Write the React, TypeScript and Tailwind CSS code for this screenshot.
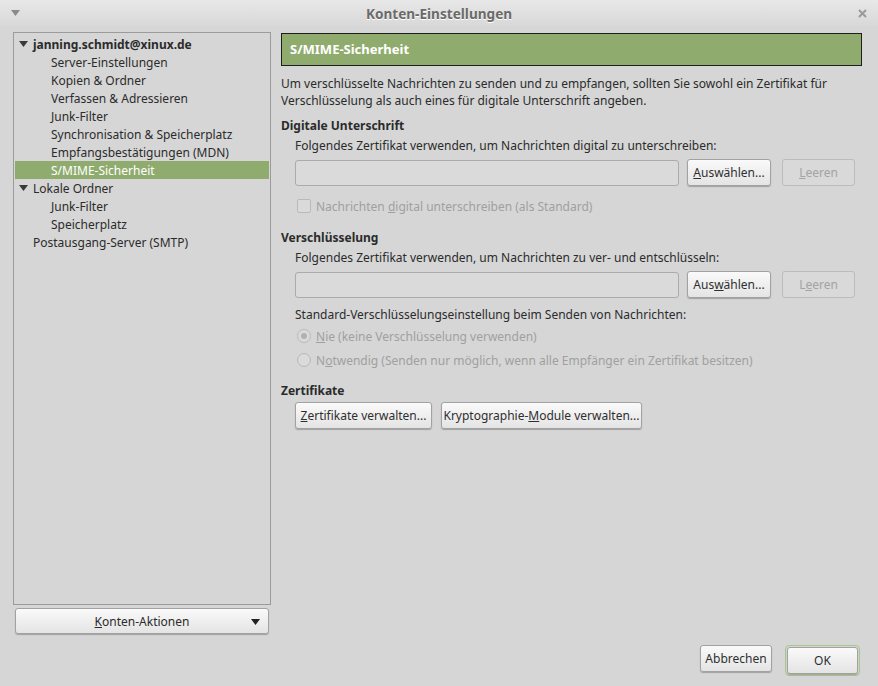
import React from 'react';

const Caret = ({ className = '' }: { className?: string }) => (
  <svg width="9" height="6" viewBox="0 0 9 6" className={className}>
    <path d="M0 0 L9 0 L4.5 6 Z" fill="currentColor" />
  </svg>
);

const Btn = ({ children, disabled, className = '' }: { children: React.ReactNode; disabled?: boolean; className?: string }) => (
  <div
    className={
      'h-[27px] px-[6px] flex items-center justify-center whitespace-nowrap rounded-[3px] border ' +
      (disabled
        ? 'border-[#bcbcbc] bg-[#d9d9d9] text-[#a3a3a3]'
        : 'border-[#a2a2a2] bg-gradient-to-b from-[#fafafa] to-[#e4e4e4] text-[#2f2f2f] shadow-[0_1px_1px_rgba(0,0,0,0.25)]') +
      ' ' + className
    }
  >
    {children}
  </div>
);

const TreeRow = ({ label, level, selected, expanded, bold }: { label: string; level: number; selected?: boolean; expanded?: boolean; bold?: boolean }) => (
  <div
    className={
      'h-[18px] flex items-center ' +
      (selected ? 'bg-[#8fac6e] text-white' : 'text-[#2b2b2b]') +
      (bold ? ' font-bold' : '')
    }
    style={{ paddingLeft: level === 0 ? 4 : 36 }}
  >
    {level === 0 && (
      <span className="w-[14px] flex items-center">{expanded && <Caret className="text-[#3a3a3a]" />}</span>
    )}
    <span>{label}</span>
  </div>
);

export default function App() {
  const tree = [
    { label: 'janning.schmidt@xinux.de', level: 0, expanded: true, bold: true },
    { label: 'Server-Einstellungen', level: 1 },
    { label: 'Kopien & Ordner', level: 1 },
    { label: 'Verfassen & Adressieren', level: 1 },
    { label: 'Junk-Filter', level: 1 },
    { label: 'Synchronisation & Speicherplatz', level: 1 },
    { label: 'Empfangsbestätigungen (MDN)', level: 1 },
    { label: 'S/MIME-Sicherheit', level: 1, selected: true },
    { label: 'Lokale Ordner', level: 0, expanded: true },
    { label: 'Junk-Filter', level: 1 },
    { label: 'Speicherplatz', level: 1 },
    { label: 'Postausgang-Server (SMTP)', level: 0 },
  ];

  return (
    <div className="w-[878px] h-[686px] bg-[#d6d6d6] flex flex-col text-[12px] text-[#2b2b2b] font-['Noto_Sans',sans-serif] leading-[17px] overflow-hidden">
      {/* Title bar */}
      <div className="h-[26px] flex items-center justify-between px-[11px] bg-gradient-to-b from-[#e8e8e8] to-[#d8d8d8]">
        <Caret className="text-[#8a8a8a]" />
        <div className="font-bold text-[13.6px] text-[#6a6a6a] [text-shadow:0_1px_0_#fff]">Konten-Einstellungen</div>
        <svg width="9" height="9" viewBox="0 0 9 9">
          <path d="M1 1 L8 8 M8 1 L1 8" stroke="#9a9a9a" strokeWidth="2" />
        </svg>
      </div>

      <div className="flex pl-[13px] pt-[6px] h-[608px]">
        {/* Left column */}
        <div className="w-[258px] flex flex-col">
          <div className="flex-1 border border-[#9b9b9b] pt-[2px] px-px">
            {tree.map((r, i) => (
              <TreeRow key={i} {...r} />
            ))}
          </div>
          <div className="mt-[3px] mx-[2px] h-[26px] relative flex items-center justify-center rounded-[3px] border border-[#a2a2a2] bg-gradient-to-b from-[#fafafa] to-[#e4e4e4] shadow-[0_1px_1px_rgba(0,0,0,0.25)]">
            <span><span className="underline">K</span>onten-Aktionen</span>
            <Caret className="absolute right-[8px] top-[10px] text-[#222]" />
          </div>
        </div>

        {/* Right column */}
        <div className="ml-[10px] w-[581px] flex flex-col pt-px">
          <div className="h-[33px] border border-[#1e1e1e] bg-[#8fac6e] flex items-center pl-[8px] text-white font-bold text-[13px]">
            S/MIME-Sicherheit
          </div>

          <p className="mt-[9px] w-[560px]">
            Um verschlüsselte Nachrichten zu senden und zu empfangen, sollten Sie sowohl ein Zertifikat für Verschlüsselung als auch eines für digitale Unterschrift angeben.
          </p>

          <div className="mt-[8px] font-bold">Digitale Unterschrift</div>
          <div className="pl-[14px] flex flex-col">
            <div className="mt-[3px]">Folgendes Zertifikat verwenden, um Nachrichten digital zu unterschreiben:</div>
            <div className="mt-[5px] flex items-center">
              <div className="w-[384px] h-[26px] rounded-[3px] border border-[#ababab] bg-[#dadada]" />
              <Btn className="ml-[8px] w-[84px]"><span><span className="underline">A</span>uswählen...</span></Btn>
              <Btn disabled className="ml-[11px] w-[73px]"><span><span className="underline">L</span>eeren</span></Btn>
            </div>
            <div className="mt-[8px] flex items-center text-[#a0a0a0] h-[24px]">
              <div className="w-[14px] h-[14px] ml-[2px] rounded-[2px] border border-[#b9b9b9] bg-[#dadada]" />
              <span className="ml-[5px]">Nachrichten <span className="underline">d</span>igital unterschreiben (als Standard)</span>
            </div>
          </div>

          <div className="mt-[11px] font-bold">Verschlüsselung</div>
          <div className="pl-[14px] flex flex-col">
            <div className="mt-[3px]">Folgendes Zertifikat verwenden, um Nachrichten zu ver- und entschlüsseln:</div>
            <div className="mt-[5px] flex items-center">
              <div className="w-[384px] h-[26px] rounded-[3px] border border-[#ababab] bg-[#dadada]" />
              <Btn className="ml-[8px] w-[84px]"><span>Aus<span className="underline">w</span>ählen...</span></Btn>
              <Btn disabled className="ml-[11px] w-[73px]"><span>L<span className="underline">e</span>eren</span></Btn>
            </div>
            <div className="mt-[8px]">Standard-Verschlüsselungseinstellung beim Senden von Nachrichten:</div>
            <div className="mt-px flex items-center text-[#a0a0a0] h-[24px]">
              <div className="w-[14px] h-[14px] ml-[2px] rounded-full border border-[#b9b9b9] bg-[#dadada] flex items-center justify-center">
                <div className="w-[6px] h-[6px] rounded-full bg-[#b0b0b0]" />
              </div>
              <span className="ml-[5px]"><span className="underline">N</span>ie (keine Verschlüsselung verwenden)</span>
            </div>
            <div className="flex items-center text-[#a0a0a0] h-[24px]">
              <div className="w-[14px] h-[14px] ml-[2px] rounded-full border border-[#b9b9b9] bg-[#dadada]" />
              <span className="ml-[5px]">N<span className="underline">o</span>twendig (Senden nur möglich, wenn alle Empfänger ein Zertifikat besitzen)</span>
            </div>
          </div>

          <div className="mt-[10px] font-bold">Zertifikate</div>
          <div className="pl-[14px] mt-[3px] flex items-center">
            <Btn className="w-[137px]"><span><span className="underline">Z</span>ertifikate verwalten...</span></Btn>
            <Btn className="ml-[9px] w-[201px]"><span>Kryptographie-<span className="underline">M</span>odule verwalten...</span></Btn>
          </div>
        </div>
      </div>

      {/* Footer buttons */}
      <div className="mt-[11px] flex justify-end pr-[18px]">
        <Btn className="w-[72px] h-[26px]">Abbrechen</Btn>
        <div className="ml-[13px] rounded-[4px] border border-[#a6c98a] p-px">
          <Btn className="w-[71px] h-[24px]">OK</Btn>
        </div>
      </div>
    </div>
  );
}
